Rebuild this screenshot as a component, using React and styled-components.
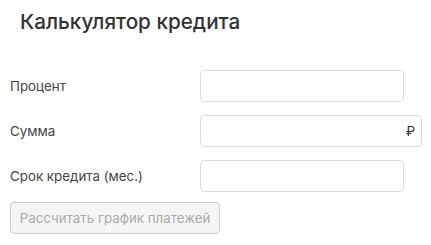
import React from 'react';
import styled, { createGlobalStyle } from 'styled-components';

const GlobalStyle = createGlobalStyle`
  body {
    margin: 0;
    background: #fff;
    font-family: Inter, "Noto Sans", sans-serif;
  }
`;

const Wrapper = styled.div`
  width: 431px;
  padding: 10px 10px 0;
  box-sizing: border-box;
`;

const Title = styled.h2`
  margin: 0 0 36px;
  padding-left: 10px;
  font-size: 20.7px;
  line-height: 24px;
  font-weight: 500;
  color: #333;
`;

const Form = styled.form`
  display: flex;
  flex-direction: column;
  gap: 13px;
`;

const Row = styled.div`
  display: grid;
  grid-template-columns: 190px ${p => (p.$wide ? '222px' : '204px')};
  align-items: center;
`;

const Label = styled.label`
  font-size: 13.33px;
  color: #444;
`;

const InputBox = styled.div`
  position: relative;
  height: 32px;
`;

const Input = styled.input`
  width: 100%;
  height: 100%;
  box-sizing: border-box;
  border: 1px solid #ddd;
  border-radius: 4px;
  padding: 0 24px 0 10px;
  font-family: inherit;
  font-size: 13.33px;
  outline: none;
`;

const Suffix = styled.span`
  position: absolute;
  right: 7px;
  top: 50%;
  transform: translateY(-50%);
  font-size: 13.33px;
  color: #333;
`;

const Actions = styled.div`
  margin-top: -3px;
`;

const CalcBtn = styled.button`
  width: 210px;
  height: 32px;
  padding: 0;
  border: 1px solid #ccc;
  border-radius: 4px;
  background: #f5f5f5;
  color: #aaa;
  font-family: inherit;
  font-size: 13.33px;
  white-space: nowrap;
`;

const fields = [
  { id: 'rate', label: 'Процент' },
  { id: 'sum', label: 'Сумма', suffix: '₽' },
  { id: 'term', label: 'Срок кредита (мес.)' },
];

export default function App() {
  return (
    <Wrapper>
      <GlobalStyle />
      <Title>Калькулятор кредита</Title>
      <Form onSubmit={e => e.preventDefault()}>
        {fields.map(f => (
          <Row key={f.id} $wide={!!f.suffix}>
            <Label htmlFor={f.id}>{f.label}</Label>
            <InputBox>
              <Input id={f.id} type="text" />
              {f.suffix && <Suffix>{f.suffix}</Suffix>}
            </InputBox>
          </Row>
        ))}
        <Actions>
          <CalcBtn type="submit" disabled>Рассчитать график платежей</CalcBtn>
        </Actions>
      </Form>
    </Wrapper>
  );
}
